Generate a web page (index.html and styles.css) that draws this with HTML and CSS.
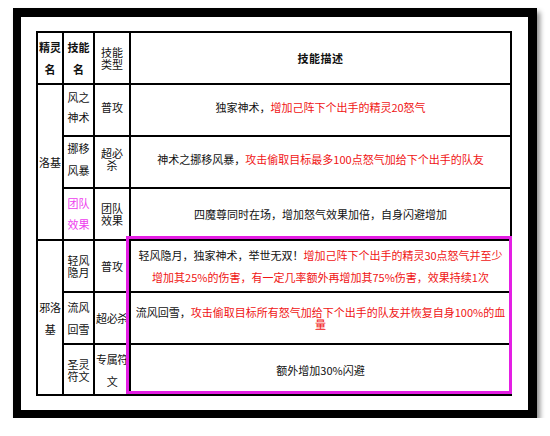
FILE: index.html
```html
<!DOCTYPE html>
<html lang="zh-CN">
<head>
<meta charset="utf-8">
<title>技能描述</title>
<link rel="stylesheet" href="styles.css">
</head>
<body>
<div class="frame">
  <div class="tablewrap">
    <table class="skills">
      <colgroup>
        <col class="c1"><col class="c2"><col class="c3"><col class="c4">
      </colgroup>
      <tr class="r52">
        <th class="loose">精灵<br>名</th>
        <th class="loose">技能<br>名</th>
        <td class="tight">技能<br>类型</td>
        <th class="desc-head">技能描述</th>
      </tr>
      <tr class="r52">
        <td rowspan="3">洛基</td>
        <td class="lh20 up">风之<br>神术</td>
        <td class="up">普攻</td>
        <td class="desc up">独家神术，<span class="red">增加己阵下个出手的精灵20怒气</span></td>
      </tr>
      <tr class="r51">
        <td class="loose up">挪移<br>风暴</td>
        <td class="tight up">超必<br>杀</td>
        <td class="desc up">神术之挪移风暴，<span class="red">攻击偷取目标最多100点怒气加给下个出手的队友</span></td>
      </tr>
      <tr class="r52">
        <td class="lh21 pink">团队<br>效果</td>
        <td class="tight">团队<br>效果</td>
        <td class="desc">四魔尊同时在场，增加怒气效果加倍，自身闪避增加</td>
      </tr>
      <tr class="r52">
        <td rowspan="3" class="loose wide">邪洛<br>基</td>
        <td class="tight">轻风<br>隐月</td>
        <td>普攻</td>
        <td class="desc loose">轻风隐月，独家神术，举世无双！<span class="red">增加己阵下个出手的精灵30点怒气并至少<br>增加其25%的伤害，有一定几率额外再增加其75%伤害，效果持续1次</span></td>
      </tr>
      <tr class="r52">
        <td class="loose">流风<br>回雪</td>
        <td class="wide">超必杀</td>
        <td class="desc tight">流风回雪，<span class="red">攻击偷取目标所有怒气加给下个出手的队友并恢复自身100%的血<br>量</span></td>
      </tr>
      <tr class="r51">
        <td class="tight">圣灵<br>符文</td>
        <td class="loose wide">专属符<br>文</td>
        <td class="desc">额外增加30%闪避</td>
      </tr>
    </table>
    <div class="highlight"></div>
  </div>
</div>
</body>
</html>
```

FILE: styles.css
```css
html, body {
  margin: 0;
  padding: 0;
  background: #ffffff;
}

body {
  font-family: "Noto Sans CJK SC", "Noto Sans", sans-serif;
  color: #111111;
}

.frame {
  box-sizing: border-box;
  width: 524px;
  height: 410px;
  margin: 8px 0 0 13px;
  border-style: solid;
  border-color: #000000;
  border-width: 9px 9px 8px 8px;
  background: #ffffff;
  padding: 14px 0 0 15px;
  box-shadow: 3px 4px 5px rgba(0, 0, 0, 0.45);
}

.tablewrap {
  position: relative;
  width: 474px;
}

.skills {
  table-layout: fixed;
  border-collapse: collapse;
  width: 474px;
  font-size: 11px;
}

.c1 { width: 26px; }
.c2 { width: 31px; }
.c3 { width: 36px; }
.c4 { width: 381px; }

.skills th,
.skills td {
  border: 2px solid #000000;
  padding: 0;
  text-align: center;
  vertical-align: middle;
  line-height: 14px;
  white-space: nowrap;
}

.skills th {
  font-weight: bold;
}

.r52 { height: 52px; }
.r51 { height: 51px; }

.desc-head {
  letter-spacing: 0.5px;
}

.loose { line-height: 22px !important; }
.lh20 { line-height: 20px !important; }
.lh21 { line-height: 21px !important; }
.tight { line-height: 12px !important; }

.up { padding-bottom: 6px !important; }

.wide {
  overflow: visible;
  letter-spacing: -0.3px;
}

.red { color: #f01414; }
.pink { color: #ee3cee; }

.highlight {
  position: absolute;
  box-sizing: border-box;
  left: 90px;
  top: 205px;
  width: 386px;
  height: 158px;
  border: 3px solid #e41ee4;
  pointer-events: none;
}
```
